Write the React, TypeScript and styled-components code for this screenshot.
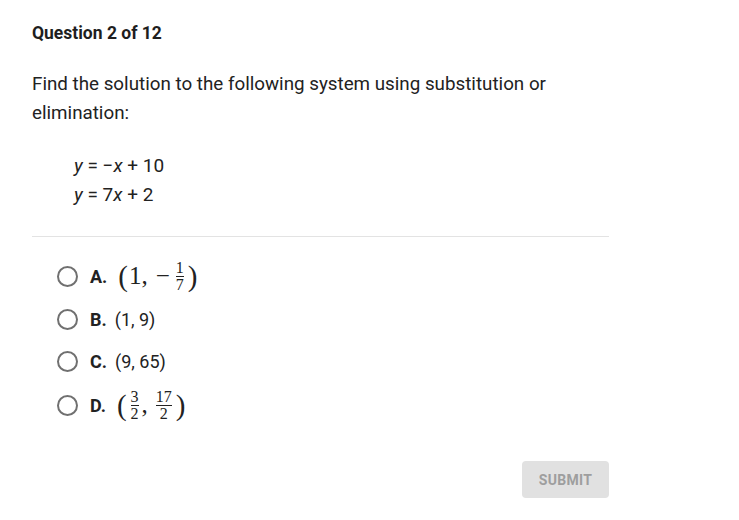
import React from "react";
import styled, { createGlobalStyle } from "styled-components";

const GlobalStyle = createGlobalStyle`
  html, body {
    margin: 0;
    padding: 0;
    background: #fff;
  }
  body {
    font-family: Roboto, "Liberation Sans", sans-serif;
    color: #222;
  }
`;

const Page = styled.div`
  width: 577px;
  padding: 22px 0 0 32px;
`;

const Title = styled.div`
  font-size: 17.5px;
  font-weight: 700;
  line-height: 22px;
  color: #1e1e1e;
`;

const Prompt = styled.p`
  margin: 26px 0 0;
  font-size: 18.8px;
  line-height: 28.5px;
  color: #222;
`;

const Equations = styled.div`
  margin: 24px 0 0 42px;
  display: flex;
  flex-direction: column;
  font-size: 19px;
  line-height: 29px;
`;

const Var = styled.i`
  font-style: italic;
`;

const Divider = styled.hr`
  margin: 27px 0 0;
  border: none;
  border-top: 1px solid #e3e3e3;
`;

const Options = styled.div`
  margin-top: 17px;
  padding-left: 25px;
  display: flex;
  flex-direction: column;
`;

const Option = styled.label<{ $h: number }>`
  display: flex;
  align-items: center;
  height: ${(p) => p.$h}px;
  gap: 12px;
  font-size: 18px;
  cursor: pointer;
`;

const Radio = styled.span`
  width: 17px;
  height: 17px;
  border: 2px solid #707070;
  border-radius: 50%;
  flex: none;
`;

const Answer = styled.span`
  display: inline-flex;
  align-items: center;
`;

const Letter = styled.b`
  font-weight: 700;
  font-size: 18px;
  margin-right: 8px;
`;

const MathText = styled.span`
  font-family: "Liberation Serif", "DejaVu Serif", serif;
  font-size: 25px;
  line-height: 30px;
  display: inline-flex;
  align-items: center;
  margin-left: 2px;
  color: #222;
`;

const Paren = styled.span`
  font-size: 29px;
  line-height: 34px;
  margin: 0 1px;
`;

const Minus = styled.span`
  margin: 0 3px 0 8px;
`;

const Comma = styled.span`
  margin-right: 5px;
`;

const Frac = styled.span`
  display: inline-flex;
  flex-direction: column;
  align-items: center;
  font-size: 16px;
  line-height: 14px;
  padding: 0 3px;
`;

const FracBar = styled.span`
  align-self: stretch;
  border-top: 1px solid #222;
  margin: 1px 0;
`;

const Footer = styled.div`
  display: flex;
  justify-content: flex-end;
  margin-top: 33px;
`;

const SubmitButton = styled.button`
  width: 87px;
  height: 37px;
  border: none;
  border-radius: 4px;
  background: #e1e1e1;
  color: #9e9e9e;
  font-family: Roboto, "Liberation Sans", sans-serif;
  font-size: 14px;
  font-weight: 700;
  letter-spacing: 0.3px;
`;

function Fraction({ n, d }: { n: string; d: string }) {
  return (
    <Frac>
      <span>{n}</span>
      <FracBar />
      <span>{d}</span>
    </Frac>
  );
}

export default function App() {
  return (
    <>
      <GlobalStyle />
      <Page>
        <Title>Question 2 of 12</Title>
        <Prompt>
          Find the solution to the following system using substitution or
          elimination:
        </Prompt>
        <Equations>
          <span>
            <Var>y</Var> = −<Var>x</Var> + 10
          </span>
          <span>
            <Var>y</Var> = 7<Var>x</Var> + 2
          </span>
        </Equations>
        <Divider />
        <Options>
          <Option $h={44}>
            <Radio />
            <Answer>
              <Letter>A.</Letter>
              <MathText>
                <Paren>(</Paren>
                <span>1,</span>
                <Minus>−</Minus>
                <Fraction n="1" d="7" />
                <Paren>)</Paren>
              </MathText>
            </Answer>
          </Option>
          <Option $h={42}>
            <Radio />
            <Answer>
              <Letter>B.</Letter>(1, 9)
            </Answer>
          </Option>
          <Option $h={42}>
            <Radio />
            <Answer>
              <Letter>C.</Letter>(9, 65)
            </Answer>
          </Option>
          <Option $h={46}>
            <Radio />
            <Answer>
              <Letter>D.</Letter>
              <MathText>
                <Paren>(</Paren>
                <Fraction n="3" d="2" />
                <Comma>,</Comma>
                <Fraction n="17" d="2" />
                <Paren>)</Paren>
              </MathText>
            </Answer>
          </Option>
        </Options>
        <Footer>
          <SubmitButton>SUBMIT</SubmitButton>
        </Footer>
      </Page>
    </>
  );
}
